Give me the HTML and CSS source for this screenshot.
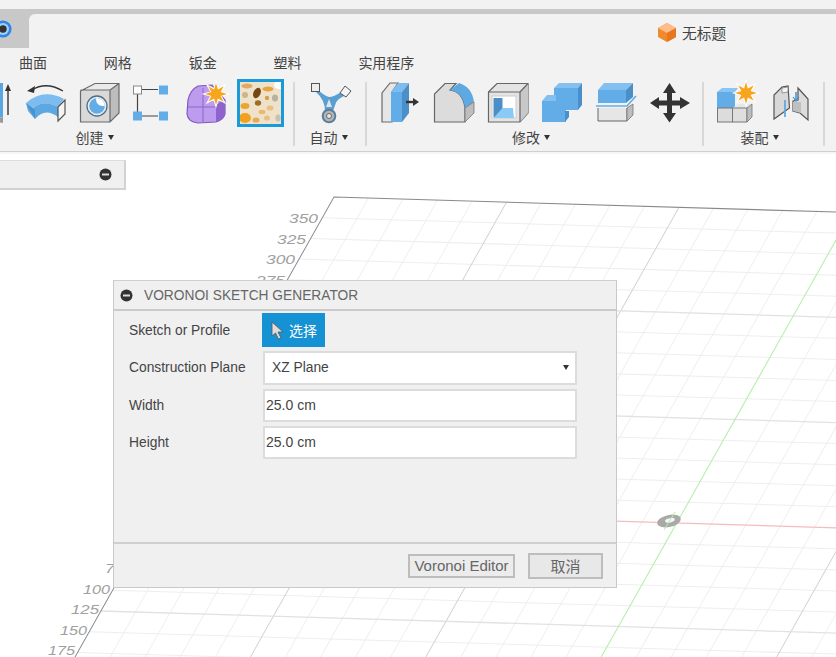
FILE: index.html
```html
<!DOCTYPE html>
<html lang="zh">
<head>
<meta charset="utf-8">
<title>Voronoi Sketch Generator</title>
<link rel="stylesheet" href="styles.css">
</head>
<body>
<div class="app">
  <svg class="canvas" width="836" height="657" viewBox="0 0 836 657">
    <g transform="matrix(1 .03 -.563 1 334 197)">
      <path class="minor" d="M34.5 0V800M69 0V800M103.5 0V800M138 0V800M207 0V800M241.5 0V800M276 0V800M310.5 0V800M379.5 0V800M414 0V800M448.5 0V800M483 0V800M552 0V800M586.5 0V800M621 0V800M655.5 0V800M724.5 0V800M759 0V800M793.5 0V800M828 0V800M897 0V800M931.5 0V800M966 0V800M1000.5 0V800M1069.5 0V800M1104 0V800M1138.5 0V800M1173 0V800"/>
      <path class="minor" d="M0 20.7H1200M0 41.4H1200M0 62.1H1200M0 82.8H1200M0 124.2H1200M0 144.9H1200M0 165.6H1200M0 186.3H1200M0 227.7H1200M0 248.4H1200M0 269.1H1200M0 289.8H1200M0 331.2H1200M0 351.9H1200M0 372.6H1200M0 393.3H1200M0 434.7H1200M0 455.4H1200M0 476.1H1200M0 496.8H1200"/>
      <path class="major" d="M172.5 0V800M345 0V800M690 0V800M862.5 0V800M1035 0V800"/>
      <path class="major-h" d="M0 103.5H1200M0 207H1200M0 414H1200"/>
      <path class="edge" d="M0 800V0H1200"/>
      <path class="x-axis" d="M0 310.5H1200"/>
      <path class="z-axis" d="M517.5 0V800"/>
    </g>
    <g class="origin">
      <ellipse cx="669" cy="521" rx="12" ry="6" transform="rotate(-12 669 521)"/>
      <ellipse class="origin-hole" cx="670" cy="520.5" rx="5" ry="2.200" transform="rotate(-12 669 521)"/>
      <path class="origin-green" d="M664 530 675 512"/>
    </g>
    <text class="tick" x="289" y="223" textLength="29" lengthAdjust="spacingAndGlyphs">350</text>
    <text class="tick" x="277" y="244" textLength="29" lengthAdjust="spacingAndGlyphs">325</text>
    <text class="tick" x="266" y="264" textLength="29" lengthAdjust="spacingAndGlyphs">300</text>
    <text class="tick" x="256" y="285" textLength="29" lengthAdjust="spacingAndGlyphs">275</text>
    <text class="tick" x="105" y="573" textLength="19" lengthAdjust="spacingAndGlyphs">75</text>
    <text class="tick" x="83" y="594" textLength="27" lengthAdjust="spacingAndGlyphs">100</text>
    <text class="tick" x="71" y="614" textLength="28" lengthAdjust="spacingAndGlyphs">125</text>
    <text class="tick" x="60" y="635" textLength="27" lengthAdjust="spacingAndGlyphs">150</text>
    <text class="tick" x="48" y="655" textLength="27" lengthAdjust="spacingAndGlyphs">175</text>
  </svg>

  <header class="chrome">
    <div class="strip"></div>
    <div class="band"></div>
    <div class="tabrow">
      <div class="tab-off">
        <svg class="logo" width="12" height="20" viewBox="0 19 12 20">
          <circle cx="3" cy="29" r="8.600" fill="#2f86e6"/>
          <circle cx="3" cy="29" r="6" fill="#9fd0f7"/>
          <circle cx="3" cy="29" r="3.700" fill="#333"/>
        </svg>
      </div>
      <div class="tab-on">
        <svg class="doc-icon" width="20" height="21" viewBox="657 23 20 21">
          <path d="M667 24 676 29 676 38 667 43 658 38 658 29Z" fill="#f08a2c"/>
          <path d="M667 24 676 29 667 34 658 29Z" fill="#ffbd8c"/>
          <path d="M667 34 676 29 676 38 667 43Z" fill="#e8761c"/>
        </svg>
        <span class="doc-name">无标题</span>
      </div>
    </div>
    <nav class="menu">
      <span>曲面</span><span>网格</span><span>钣金</span><span>塑料</span><span>实用程序</span>
    </nav>
    <div class="ribbon">
      <section class="group group-create">
        <div class="tools">
          <svg class="tool" viewBox="-36 78 54 50">
            <path d="M-8 83H3V118L-8 114Z" fill="#5aa6e0"/>
            <path d="M-8 115 3 118V123L-8 121Z" fill="#999"/>
            <path d="M8 115V88" stroke="#333" stroke-width="1.400" fill="none"/>
            <path d="M8 84 5 91H11Z" fill="#333"/>
          </svg>
          <svg class="tool" viewBox="18 78 54 50">
            <path d="M32 90Q46 81 63 91" stroke="#333" stroke-width="1.300" fill="none"/>
            <path d="M27 91 35 86 34 93Z" fill="#333"/>
            <path d="M26 103Q43 88 64 99L58 107Q44 99 33 108Z" fill="#7cbcee"/>
            <path d="M26 103 33 108Q44 99 58 107V117Q45 107 35 119L28 111Z" fill="#5ca8e2"/>
            <path d="M26 103 35 119V110Z" fill="#4a92cc"/>
            <path d="M58 107 65 100V114L58 121Z" fill="#f4f4f4" stroke="#555" stroke-width="1.200"/>
          </svg>
          <svg class="tool" viewBox="72 78 54 50">
            <path d="M80 90 95 83H119L110 90Z" fill="#eaeaea"/>
            <path d="M110 90 119 83V113L110 122Z" fill="#bdbdbd"/>
            <rect x="80.500" y="90" width="29.500" height="32" fill="#d9d9d9"/>
            <path d="M80.500 122V91L95 83.500H119V113L110 122ZM110 122V90L119 83.500M80.500 90H110" fill="none" stroke="#6a6a6a" stroke-width="1.200"/>
            <circle cx="97" cy="106" r="10" fill="#eee" stroke="#4f6f88" stroke-width="1.300"/>
            <circle cx="97" cy="106" r="7.800" fill="#62ade8"/>
            <path d="M96 98.300A7.800 7.800 0 0 1 104.700 106Q96 107 96 98.300Z" fill="#fff"/>
          </svg>
          <svg class="tool" viewBox="126 78 54 50">
            <path d="M142 89.500H158M137.500 94V112M142 116H158" stroke="#444" stroke-width="1.200" fill="none"/>
            <rect x="133.500" y="86" width="8" height="8" fill="#fff" stroke="#888"/>
            <rect x="159" y="85.500" width="9" height="9" fill="#62ade8"/>
            <rect x="133" y="111.500" width="9" height="9" fill="#62ade8"/>
            <rect x="159" y="111.500" width="9" height="9" fill="#62ade8"/>
          </svg>
          <svg class="tool" viewBox="180 78 54 50">
            <path d="M188 100Q190 90 198 86L212 85 225 100V114Q223 120 216 122L198 123Q188 122 187 114Z" fill="#bd9cf0" stroke="#8358bf" stroke-width="1.200"/>
            <path d="M216 105 225 99V115Q223 120 216 122Z" fill="#8f63cc"/>
            <path d="M188 107H216M203 88V122" stroke="#8e66c8" stroke-width="1" fill="none"/>
            <path transform="translate(216 94)" d="M0-11 1.900-4.600 7.800-7.800 4.600-1.900 11 0 4.600 1.900 7.800 7.800 1.900 4.600 0 11-1.900 4.600-7.800 7.800-4.600 1.900-11 0-4.600-1.900-7.800-7.800-1.900-4.600Z" fill="#f7a51d" stroke="#fff" stroke-width="2" paint-order="stroke"/>
          </svg>
          <svg class="thumb" viewBox="240 82 41 42">
            <rect x="240" y="82" width="41" height="42" fill="#efe2ca"/>
            <g class="blur">
              <ellipse cx="247" cy="86" rx="5.500" ry="2.600" fill="#dfa968"/>
              <ellipse cx="268" cy="89" rx="5.500" ry="2.600" fill="#e8a440"/>
              <ellipse cx="279" cy="85" rx="5" ry="4" fill="#ffffff"/>
              <ellipse cx="245" cy="95" rx="3" ry="3" fill="#ccb48c"/>
              <ellipse cx="257" cy="93" rx="3.500" ry="5.500" fill="#744610" transform="rotate(25 257 93)"/>
              <ellipse cx="275" cy="98" rx="3" ry="3.500" fill="#b8b0a0"/>
              <ellipse cx="267" cy="98" rx="2.200" ry="2.200" fill="#d4a050"/>
              <ellipse cx="245" cy="106" rx="4.500" ry="3" fill="#eba430"/>
              <ellipse cx="258" cy="103" rx="3.200" ry="2.800" fill="#a06c20"/>
              <ellipse cx="270" cy="108" rx="3.500" ry="2.600" fill="#ecc080"/>
              <ellipse cx="262" cy="112" rx="3.500" ry="2.200" fill="#ecb870"/>
              <ellipse cx="245" cy="118" rx="6" ry="5" fill="#f2a01e"/>
              <ellipse cx="256" cy="120" rx="3.500" ry="2.600" fill="#e8aa50"/>
              <ellipse cx="267" cy="118" rx="3" ry="2.600" fill="#e6c088"/>
              <ellipse cx="278" cy="118" rx="2.600" ry="3.500" fill="#c8c0b0"/>
            </g>
          </svg>
        </div>
        <div class="group-label shift-create">创建<i class="caret"></i></div>
      </section>
      <div class="sep"></div>
      <section class="group group-auto">
        <div class="tools">
          <svg class="tool" viewBox="303 78 54 50">
            <path d="M318 90Q325 96 329 97 334 97 341 92L344 96Q337 99 335.500 104L333 111H325Q325 100 316 92Z" fill="#5a9fd2"/>
            <path d="M329 99 332 107H326Z" fill="#dde4ea"/>
            <circle cx="329" cy="116" r="6.300" fill="#b5b5b5" stroke="#5a7f9e" stroke-width="2"/>
            <circle cx="329" cy="116" r="2.500" fill="#e8e8e8" stroke="#666"/>
            <rect x="311.500" y="83.500" width="8" height="8" fill="#eee" stroke="#555"/>
            <path d="M345 86 351 91 346 97 340 93Z" fill="#f4f4f4" stroke="#555"/>
          </svg>
        </div>
        <div class="group-label shift-auto">自动<i class="caret"></i></div>
      </section>
      <div class="sep"></div>
      <section class="group group-modify">
        <div class="tools">
          <svg class="tool" viewBox="374 78 54 50">
            <path d="M382 122V93L390 83H398L392 92V122Z" fill="#e6e6e6" stroke="#6a6a6a" stroke-width="1.200"/>
            <path d="M391 92 398 83H409L402 92Z" fill="#7cbcee"/>
            <rect x="391" y="92" width="11" height="30" fill="#62ade8"/>
            <path d="M402 92 409 83V113L402 122Z" fill="#4a8fc8"/>
            <path d="M406 102H414" stroke="#333" stroke-width="2.400"/>
            <path d="M413 98 419 102 413 106Z" fill="#333"/>
          </svg>
          <svg class="tool" viewBox="428 78 54 50">
            <path d="M434.500 122V94L445 83.500H456L450 90Q463 92 465 108V122Z" fill="#dcdcdc" stroke="#666" stroke-width="1.200"/>
            <path d="M459 83Q472 87 474 102L465 108Q463 92 450 90Z" fill="#5fa9e2"/>
            <path d="M465 108 474 102V113L465 122Z" fill="#bdbdbd" stroke="#777" stroke-width=".8"/>
          </svg>
          <svg class="tool" viewBox="482 78 54 50">
            <path d="M488.500 92 497 83.500H528V113L520 122H488.500Z" fill="#e4e4e4" stroke="#666" stroke-width="1.200"/>
            <path d="M520 92 528 83.500V113L520 122Z" fill="#c8c8c8"/>
            <path d="M488.500 92H520V122M520 92 528 83.500" fill="none" stroke="#666" stroke-width="1.200"/>
            <rect x="492" y="96" width="24" height="22" fill="#fff" stroke="#ccc"/>
            <rect x="493.500" y="98" width="9" height="19" fill="#4a8fc8"/>
            <path d="M493.500 118H514L513 108H502.500Z" fill="#8ccaf6"/>
          </svg>
          <svg class="tool" viewBox="536 78 54 50">
            <path d="M554 88 559 83H582L578 88Z" fill="#83c0f0"/>
            <path d="M578 88 582 83V105L578 110Z" fill="#4a8fc8"/>
            <rect x="554" y="88" width="24" height="22" fill="#62ade8"/>
            <path d="M542 101 547 95H556V101Z" fill="#83c0f0"/>
            <rect x="542" y="101" width="24" height="21" fill="#62ade8"/>
            <path d="M565 111H569V117L565 122Z" fill="#4a8fc8"/>
          </svg>
          <svg class="tool" viewBox="590 78 54 50">
            <rect x="598" y="90" width="28" height="13" fill="#62ade8"/>
            <path d="M598 90 604 83H633L626 90Z" fill="#83c0f0"/>
            <path d="M626 90 633 83V97L626 103Z" fill="#4a8fc8"/>
            <path d="M596 106H627L636 96" fill="none" stroke="#62ade8" stroke-width="1.600"/>
            <path d="M598 108V121H627V108" fill="#e6e6e6" stroke="#666"/>
            <path d="M627 108 633 104V115L627 121Z" fill="#bdbdbd" stroke="#777" stroke-width=".8"/>
          </svg>
          <svg class="tool" viewBox="644 78 54 50">
            <path d="M669.500 83 676 93H672V100.500H680V97L690 103 680 109V105.500H672V113H676L669.500 122.500 663 113H667V105.500H659V109L650 103 659 97V100.500H667V93H663Z" fill="#333"/>
          </svg>
        </div>
        <div class="group-label shift-modify">修改<i class="caret"></i></div>
      </section>
      <div class="sep"></div>
      <section class="group group-assemble">
        <div class="tools">
          <svg class="tool" viewBox="708 78 54 50">
            <path d="M717 92 722 88H738L735 92Z" fill="#8ac4f2"/>
            <rect x="717" y="92" width="18" height="16" fill="#62ade8"/>
            <rect x="717.500" y="108" width="15" height="14" fill="#dcdcdc" stroke="#777"/>
            <path d="M732.500 108 738 104H752V117L747 122H732.500Z" fill="#e8e8e8"/>
            <path d="M732.500 108H747V122H732.500Z" fill="#dedede" stroke="#777"/>
            <path d="M747 108 752 104V117L747 122Z" fill="#bdbdbd" stroke="#777" stroke-width=".8"/>
            <path transform="translate(746 93)" d="M0-11 1.900-4.600 7.800-7.800 4.600-1.900 11 0 4.600 1.900 7.800 7.800 1.900 4.600 0 11-1.900 4.600-7.800 7.800-4.600 1.900-11 0-4.600-1.900-7.800-7.800-1.900-4.600Z" fill="#f7a51d" stroke="#fff" stroke-width="2" paint-order="stroke"/>
          </svg>
          <svg class="tool" viewBox="762 78 54 50">
            <path d="M774 119V95L782 87 788 86 789.500 108Z" fill="#d8d8d8" stroke="#555" stroke-width="1.200"/>
            <path d="M782 88 788 87V92L782 93Z" fill="#f4f4f4" stroke="#777" stroke-width=".7"/>
            <path d="M785 100V117" stroke="#5aa6e0" stroke-width="1.700"/>
            <path d="M798 88 808 99V120L800 113 793 111V101L798 100Z" fill="#dcdcdc" stroke="#555" stroke-width="1.200"/>
            <path d="M793 102H801V113L793 111Z" fill="#bfbfbf"/>
            <path d="M796 92V100" stroke="#3f8fd0" stroke-width="1.500"/>
            <path d="M793 97 796 101 799 97" fill="none" stroke="#3f8fd0" stroke-width="1.200"/>
          </svg>
        </div>
        <div class="group-label shift-assemble">装配<i class="caret"></i></div>
      </section>
      <div class="sep"></div>
    </div>
  </header>

  <aside class="browser">
    <svg class="minus" width="13" height="13" viewBox="0 0 13 13"><circle cx="6.500" cy="6.500" r="6" fill="#333"/><rect x="3" y="5.500" width="7" height="2" fill="#ddd"/></svg>
  </aside>

  <div class="dialog">
    <div class="dialog-head">
      <svg class="minus" width="13" height="13" viewBox="0 0 13 13"><circle cx="6.500" cy="6.500" r="6" fill="#333"/><rect x="3" y="5.500" width="7" height="2" fill="#ddd"/></svg>
      <span class="dialog-title">VORONOI SKETCH GENERATOR</span>
    </div>
    <div class="dialog-body">
      <div class="row row-select">
        <label>Sketch or Profile</label>
        <button class="pick">
          <svg width="13" height="19" viewBox="0 0 13 19"><path d="M1 1V15L4.500 12 7.500 18 10 17 7 11H12Z" fill="#ddd" stroke="#555" stroke-width=".8"/></svg>
          <span>选择</span>
        </button>
      </div>
      <div class="row row-plane">
        <label>Construction Plane</label>
        <div class="combo"><span>XZ Plane</span><i class="combo-caret"></i></div>
      </div>
      <div class="row row-input">
        <label>Width</label>
        <div class="field">25.0 cm</div>
      </div>
      <div class="row row-input">
        <label>Height</label>
        <div class="field">25.0 cm</div>
      </div>
    </div>
    <div class="dialog-foot">
      <button class="btn btn-editor">Voronoi Editor</button>
      <button class="btn btn-cancel">取消</button>
    </div>
  </div>
</div>
</body>
</html>
```

FILE: styles.css
```css
* { box-sizing: border-box; }
html, body { margin: 0; padding: 0; background: #fff; }
body { font-family: "Liberation Sans", "Noto Sans CJK SC", sans-serif; color: #444; }
.app { position: relative; width: 836px; height: 657px; overflow: hidden; background: #fff; }

/* canvas */
.canvas { position: absolute; left: 0; top: 0; display: block; }
.canvas path { fill: none; }
.minor { stroke: #eeeeee; stroke-width: 1; }
.major { stroke: #cfcfcf; stroke-width: 1; }
.major-h { stroke: #e2e2e2; stroke-width: 1.300; }
.edge { stroke: #8a8a8a; stroke-width: 1.100; }
.x-axis { stroke: #f6bcbc; stroke-width: 1.200; }
.z-axis { stroke: #b4efaa; stroke-width: 1.200; }
.origin ellipse { fill: #a9a9a9; }
.origin .origin-hole { fill: #f4f4f4; }
.canvas .origin-green { stroke: #b4efaa; stroke-width: 1; }
.tick { font: italic 13px "Liberation Sans", sans-serif; fill: #a0a0a0; }

/* chrome */
.chrome { position: relative; background: #f2f2f2; height: 152px; border-bottom: 1px solid #cfcfcf; box-shadow: 0 2px 0 #f6f6f6; }
.strip { height: 9px; }
.band { height: 5px; background: #c8c8c8; }
.tabrow { display: flex; height: 34px; background: #c8c8c8; }
.tab-off { width: 29px; overflow: hidden; padding-top: 5px; }
.logo { display: block; }
.tab-on { flex: 1; background: #f2f2f2; border-top-left-radius: 6px; display: flex; align-items: center; padding: 2px 0 0 628px; }
.doc-icon { display: block; margin-right: 5px; }
.doc-name { font: 14.700px "Noto Sans CJK SC", sans-serif; color: #444; }

.menu { display: flex; gap: 56.850px; height: 30px; padding: 0 0 2px 19px; align-items: center; font: 14px/20px "Noto Sans CJK SC", sans-serif; color: #444; }

.ribbon { display: flex; height: 73px; }
.group { display: flex; flex-direction: column; flex: none; }
.group-create { margin-left: -97px; width: 384px; margin-right: 6px; }
.group-auto { width: 70px; }
.group-modify { width: 335px; }
.group-assemble { width: 119px; }
.tools { display: flex; height: 49px; justify-content: center; }
.group-create .tools { justify-content: flex-end; }
.group-modify .tools { justify-content: flex-start; padding-left: 7px; }
.group-assemble .tools { justify-content: flex-start; padding-left: 4px; }
.tool { display: block; flex: none; width: 54px; height: 50px; }
.thumb { display: block; flex: none; width: 47px; height: 48px; margin: 1px 3px; border: 3px solid #1a9ad8; }
.blur { filter: blur(.7px); }
.group-label { display: flex; align-items: center; justify-content: center; height: 20px; font: 14px/20px "Noto Sans CJK SC", sans-serif; color: #444; }
.shift-create { padding-right: 1px; }
.shift-auto { padding-right: 3px; }
.shift-modify { padding-right: 7px; }
.shift-assemble { padding-right: 8px; }
.caret { width: 0; height: 0; margin-left: 4px; border-left: 3.500px solid transparent; border-right: 3.500px solid transparent; border-top: 5px solid #333; }
.sep { flex: none; width: 2px; height: 64px; margin-top: 4px; background: #d8d8d8; }

/* browser panel */
.browser { position: relative; width: 126px; height: 30px; margin-top: 8px; background: #f0f0f0; border-right: 2px solid #d2d2d2; border-bottom: 2px solid #d2d2d2; border-top: 1px solid #ddd; display: flex; align-items: center; justify-content: flex-end; padding-right: 12px; }
.minus { display: block; flex: none; }

/* dialog */
.dialog { position: absolute; left: 113px; top: 280px; width: 504px; height: 308px; background: #f0f0f0; border: 1px solid #c9c9c9; border-top-color: #d0d0d0; display: flex; flex-direction: column; }
.dialog-head { display: flex; align-items: center; height: 30px; flex: none; padding-left: 6px; border-bottom: 2px solid #cbcbcb; }
.dialog-title { margin-left: 11px; font-size: 13.750px; color: #666; }
.dialog-body { flex: 1; padding-top: 2px; border-bottom: 2px solid #cfcfcf; }
.row { display: flex; align-items: center; padding-left: 15px; }
.row label { width: 133px; flex: none; font-size: 13.800px; color: #444; }
.row-plane label, .row-input label { padding-bottom: 1px; }
.row-select { height: 34px; }
.pick { display: flex; align-items: center; width: 63px; height: 34px; margin: 0; padding: 0 0 0 9px; border: 0; background: #1592d3; color: #fff; font: 14px "Noto Sans CJK SC", sans-serif; }
.pick svg { display: block; margin-right: 5px; }
.row-plane { height: 34px; margin-top: 4px; }
.combo { width: 314px; height: 34px; margin-left: 1px; background: #fff; border: 2px solid #dcdcdc; display: flex; align-items: center; justify-content: space-between; padding: 0 6px 1px 7px; font-size: 13.800px; color: #444; }
.combo-caret { width: 0; height: 0; border-left: 3.500px solid transparent; border-right: 3.500px solid transparent; border-top: 5px solid #333; }
.row-input { height: 33px; margin-top: 4px; }
.field { width: 314px; height: 33px; margin-left: 1px; background: #fff; border: 2px solid #dcdcdc; padding-left: 1px; font-size: 14px; line-height: 28px; color: #444; }
.dialog-foot { height: 43px; flex: none; display: flex; align-items: center; justify-content: flex-end; gap: 13px; padding: 0 13px 0 0; }
.btn { margin: 0; padding: 0; border: 2px solid #bdbdbd; background: #ececec; color: #666; }
.btn-editor { width: 107px; height: 24px; font: 15px "Liberation Sans", sans-serif; }
.btn-cancel { width: 75px; height: 26px; background: #e8e8e8; font: 15px "Noto Sans CJK SC", sans-serif; }
```
